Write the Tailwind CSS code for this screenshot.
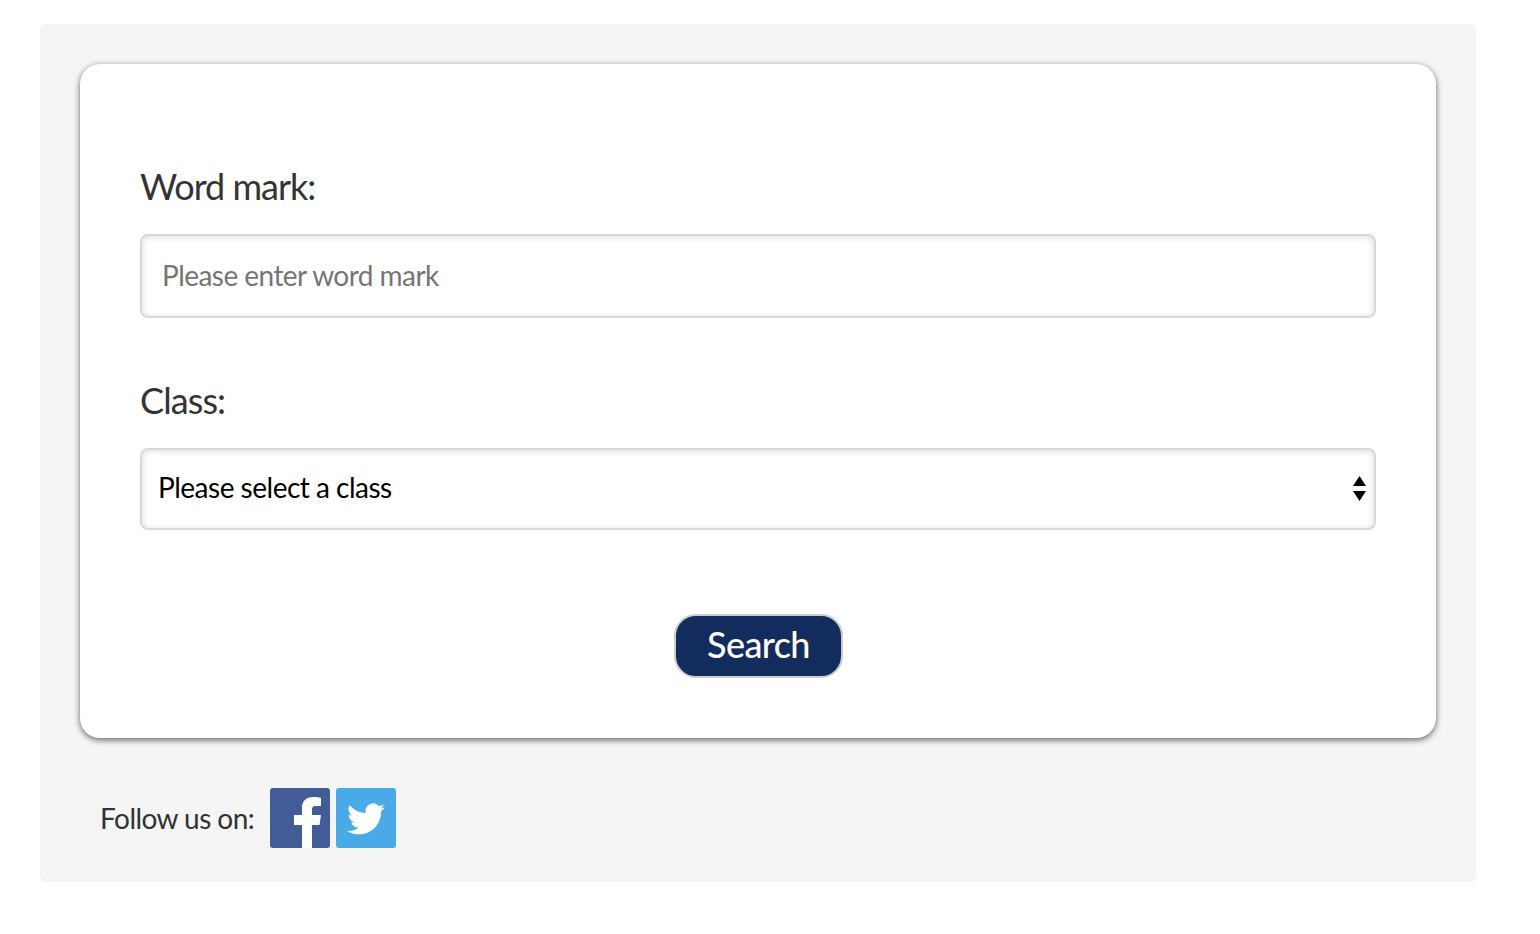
<!DOCTYPE html>
<html><head><meta charset="utf-8"><script src="https://cdn.jsdelivr.net/npm/@tailwindcss/browser@4"></script></head>
<body class="bg-white font-['Lato','Open_Sans',sans-serif]">
<div class="ml-10 mt-6 w-[1436px] h-[858px] bg-[#f5f5f5] rounded-md pt-10 px-10 box-border">
<div class="w-[1356px] h-[674px] bg-white rounded-[20px] shadow-[0_2px_6px_rgba(0,0,0,0.6)] px-[60px] pt-[102px] box-border">
<div class="text-[36px] leading-[40px] text-[#333] tracking-[-1px]">Word mark:</div>
<input placeholder="Please enter word mark" class="block mt-[28px] w-[1236px] h-[84px] border-2 border-[#d8d8d8] rounded-lg pl-[20px] pr-5 pb-[2px] text-[28px] placeholder:text-[#757575] tracking-[-0.55px] shadow-[inset_0_1px_7px_rgba(0,0,0,0.14)]">
<div class="mt-[62px] text-[36px] leading-[40px] text-[#333] tracking-[-0.9px]">Class:</div>
<div class="relative mt-[28px] w-[1236px] h-[82px] border-2 border-[#d8d8d8] rounded-lg pl-[16px] pb-[4px] flex items-center text-[28px] text-black tracking-[-0.5px] shadow-[inset_0_1px_7px_rgba(0,0,0,0.14)]">Please select a class
<svg class="absolute right-[8px] top-[26px]" width="13" height="25" viewBox="0 0 13 25"><path d="M6.5 0L13 10H0Z M0 15H13L6.5 25Z" fill="#000"/></svg></div>
<div class="flex justify-center mt-[84px]"><button class="w-[169px] ml-px h-[64px] pb-[4px] bg-[#132c5e] text-white text-[36px] font-medium rounded-[22px] border-2 border-[#ccc] tracking-[-0.6px]">Search</button></div>
</div>
<div class="flex items-center mt-[50px] ml-[20px] text-[28px] text-[#333] tracking-[-0.55px]"><span>Follow us on:</span>
<svg class="ml-[16px] rounded-[3px]" width="60" height="60" viewBox="0 0 60 60"><rect width="60" height="60" fill="#415c96"/><path d="M32 60V37H24V27H32V20C32 13 36 9 43 9C46 9 49 9 51 10V18H46C43 18 42 19 42 22V27H51L49.5 37H42V60Z" fill="#fff"/></svg>
<svg class="ml-[6px] rounded-[3px]" width="60" height="60" viewBox="0 0 60 60"><rect width="60" height="60" fill="#4aaae8"/><path transform="translate(11 12) scale(1.58)" d="M23.953 4.57a10 10 0 01-2.825.775 4.958 4.958 0 002.163-2.723c-.951.555-2.005.959-3.127 1.184a4.92 4.92 0 00-8.384 4.482C7.69 8.095 4.067 6.13 1.64 3.162a4.822 4.822 0 00-.666 2.475c0 1.71.87 3.213 2.188 4.096a4.904 4.904 0 01-2.228-.616v.06a4.923 4.923 0 003.946 4.827 4.996 4.996 0 01-2.212.085 4.936 4.936 0 004.604 3.417 9.867 9.867 0 01-6.102 2.105c-.39 0-.779-.023-1.17-.067a13.995 13.995 0 007.557 2.209c9.053 0 13.998-7.496 13.998-13.985 0-.21 0-.42-.015-.63A9.935 9.935 0 0024 4.59z" fill="#fff"/></svg>
</div>
</div>
</body></html>
